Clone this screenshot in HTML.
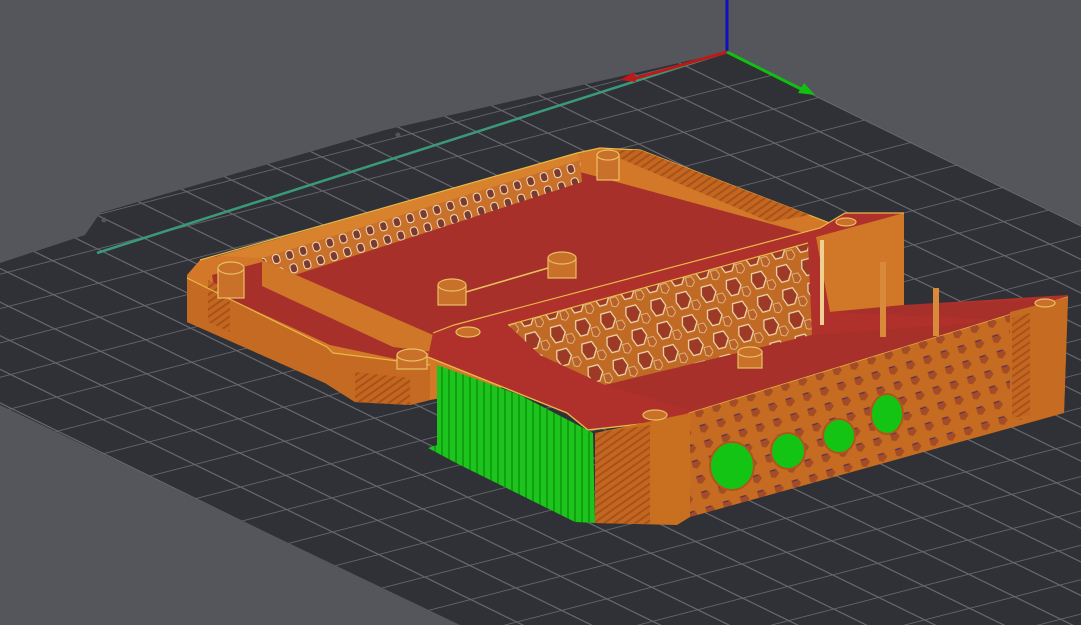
<!DOCTYPE html>
<html><head><meta charset="utf-8"><style>html,body{margin:0;padding:0;background:#55565c;overflow:hidden}svg{display:block}</style></head><body>
<svg width="1081" height="625" viewBox="0 0 1081 625" xmlns="http://www.w3.org/2000/svg">
<defs>
<pattern id="grid" patternUnits="userSpaceOnUse" width="1" height="1" patternTransform="matrix(46,22.5,-45,11.6,727,52)">
<rect x="0" y="0" width="1" height="1" fill="#303136"/>
<rect x="0" y="0" width="0.025" height="1" fill="#67686d"/>
<rect x="0" y="0" width="1" height="0.04" fill="#67686d"/>
</pattern>
<pattern id="slots" patternUnits="userSpaceOnUse" width="14" height="14" patternTransform="rotate(-17)">
<rect width="14" height="14" fill="#c9702a"/>
<rect x="3" y="2" width="7" height="9" rx="3" fill="#7a3a30" stroke="#f3e2c0" stroke-width="1"/>
</pattern>
<pattern id="hex" patternUnits="userSpaceOnUse" width="26" height="24" patternTransform="rotate(-15)">
<rect width="26" height="24" fill="#c06a26"/>
<path d="M5 3 L15 3 L18 11 L13 19 L6 19 L3 11Z" fill="#9c3a26" stroke="#f0dcb0" stroke-width="1.2"/>
<path d="M18 14 L24 14 L26 20 L22 24 L18 22Z" fill="#b9612a" stroke="#e5c890" stroke-width="0.8"/>
</pattern>
<pattern id="hexf" patternUnits="userSpaceOnUse" width="18" height="16" patternTransform="rotate(-17)">
<rect width="18" height="16" fill="#c66c22"/>
<path d="M4 3 L11 3 L13 8 L8 12 L4 10Z" fill="#a44c26"/>
<path d="M5 4 L10 4" stroke="#2a2a80" stroke-width="0.8"/>
</pattern>
<pattern id="stripe" patternUnits="userSpaceOnUse" width="6" height="6" patternTransform="rotate(-35)">
<rect width="6" height="6" fill="#c4661f"/>
<rect width="6" height="2" fill="#a5531a"/>
</pattern>
<pattern id="gstripe" patternUnits="userSpaceOnUse" width="7" height="10">
<rect width="7" height="10" fill="#1dc41d"/>
<rect width="2" height="10" fill="#10a010"/>
</pattern>
</defs>
<rect width="1081" height="625" fill="#55565c"/>
<polygon points="727,52 1081,225 1081,625 460,625 0,405 0,263 85,235 100,213 385,130" fill="url(#grid)"/>
<circle cx="398" cy="135" r="2.5" fill="#55565c"/><circle cx="104" cy="220" r="2.5" fill="#55565c"/>
<line x1="727" y1="0" x2="727" y2="52" stroke="#1010c0" stroke-width="3"/>
<line x1="727" y1="52" x2="97" y2="253" stroke="#3a9a78" stroke-width="2.5"/>
<line x1="727" y1="52" x2="630" y2="80" stroke="#c01818" stroke-width="3"/>
<polygon points="620,80 634,72 636,82" fill="#c01818"/>
<line x1="727" y1="52" x2="803" y2="90" stroke="#10c010" stroke-width="3"/>
<polygon points="815,95 798,93 804,83" fill="#10c010"/>
<polygon points="187,275 200,260 218,256 577,153 600,148 640,150 835,225 835,330 430,400 410,405 355,402 325,383 187,322" fill="#d27828"/>
<polygon points="262,262 580,172 830,240 830,330 440,350 400,360 330,345 215,292 212,275" fill="#a8302a"/>
<polygon points="262,258 580,160 582,182 264,285" fill="url(#slots)"/>
<polygon points="218,256 577,153 580,160 262,258" fill="#d8822e"/>
<polygon points="262,260 433,335 433,352 393,347 262,286" fill="#cf7628"/>
<polygon points="187,278 327,347 333,353 430,365 430,400 410,405 355,402 325,383 187,322" fill="#c56a22"/>
<polygon points="208,280 230,290 230,332 208,322" fill="url(#stripe)"/>
<polygon points="355,372 410,378 410,405 355,402" fill="url(#stripe)"/>
<polyline points="187,278 327,347 333,353 430,365" fill="none" stroke="#e8b848" stroke-width="1.2"/>
<polyline points="200,260 577,153 600,148 640,150 835,225" fill="none" stroke="#e8b848" stroke-width="1.2"/>
<polygon points="600,150 640,150 810,215 770,222" fill="url(#stripe)"/>
<g fill="#c9702a" stroke="#e8c060" stroke-width="1.2">
<rect x="218" y="268" width="26" height="30"/><ellipse cx="231" cy="268" rx="13" ry="6"/>
<rect x="597" y="155" width="22" height="25"/><ellipse cx="608" cy="155" rx="11" ry="5"/>
<rect x="438" y="285" width="28" height="20"/><ellipse cx="452" cy="285" rx="14" ry="6"/>
<rect x="548" y="258" width="28" height="20"/><ellipse cx="562" cy="258" rx="14" ry="6"/>
<rect x="397" y="355" width="30" height="14"/><ellipse cx="412" cy="355" rx="15" ry="6"/>
</g>
<line x1="466" y1="292" x2="548" y2="268" stroke="#e8c060" stroke-width="1.5"/>
<polygon points="433,333 454,325 820,228 845,213 904,213 904,305 1068,295 1068,300 690,413 677,420 588,430 567,413 428,357" fill="#b0302b"/>
<polygon points="508,325 808,243 812,335 605,385 540,355" fill="url(#hex)"/>
<polygon points="605,385 812,335 1040,318 690,410" fill="#a8302a"/>
<polygon points="816,237 904,213 904,305 830,312" fill="#d07828"/>
<polygon points="830,312 904,305 1045,300 1000,320" fill="#a8302a"/>
<rect x="880" y="262" width="6" height="75" fill="#d9893a"/>
<rect x="933" y="288" width="6" height="48" fill="#d9893a"/>
<rect x="820" y="240" width="4" height="85" fill="#f0d090"/>
<polyline points="428,357 567,413 588,430 677,420 690,413 1068,297" fill="none" stroke="#e8b848" stroke-width="1.4"/>
<polyline points="433,333 454,325 820,228 845,213 904,213" fill="none" stroke="#e8b848" stroke-width="1.2"/>
<polyline points="508,325 808,243" fill="none" stroke="#e8b848" stroke-width="1.2"/>
<polygon points="437,365 520,395 593,433 595,523 575,522 460,465 428,448 437,445" fill="url(#gstripe)"/>
<polygon points="595,433 690,413 690,517 677,525 595,523" fill="#c8701f"/>
<polygon points="595,433 650,425 650,524 595,523" fill="url(#stripe)"/>
<polygon points="690,413 1068,297 1064,413 690,517" fill="url(#hexf)"/>
<polygon points="1010,312 1068,297 1064,413 1010,420" fill="#c66c22"/>
<polygon points="1012,318 1030,313 1030,415 1012,418" fill="url(#stripe)"/>
<g fill="#14c414" stroke="#b0561c" stroke-width="2">
<ellipse cx="732" cy="466" rx="22" ry="24"/>
<ellipse cx="788" cy="451" rx="17" ry="18"/>
<ellipse cx="839" cy="436" rx="16" ry="17"/>
<ellipse cx="887" cy="414" rx="16" ry="20"/>
</g>
<g fill="#c9702a" stroke="#e8c060" stroke-width="1.2">
<ellipse cx="468" cy="332" rx="12" ry="5"/>
<ellipse cx="655" cy="415" rx="12" ry="5"/>
<ellipse cx="846" cy="222" rx="10" ry="4"/>
<ellipse cx="1045" cy="303" rx="10" ry="4"/>
<rect x="738" y="352" width="24" height="16"/><ellipse cx="750" cy="352" rx="12" ry="5"/>
</g>
</svg>
</body></html>
